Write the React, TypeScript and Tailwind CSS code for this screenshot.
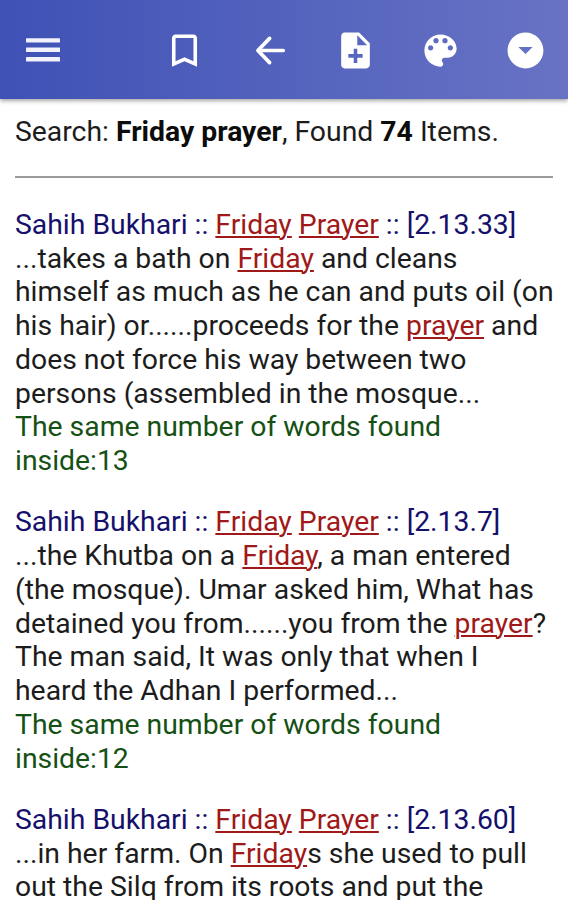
import { MdBookmarkBorder, MdNoteAdd, MdArrowDropDownCircle } from 'react-icons/md';

const results = [
  {
    ref: '[2.13.33]',
    lines: [
      '...takes a bath on *Friday* and cleans',
      'himself as much as he can and puts oil (on',
      'his hair) or......proceeds for the *prayer* and',
      'does not force his way between two',
      'persons (assembled in the mosque...',
    ],
    count: 13,
  },
  {
    ref: '[2.13.7]',
    lines: [
      '...the Khutba on a *Friday*, a man entered',
      '(the mosque). Umar asked him, What has',
      'detained you from......you from the *prayer*?',
      'The man said, It was only that when I',
      'heard the Adhan I performed...',
    ],
    count: 12,
  },
  {
    ref: '[2.13.60]',
    lines: [
      '...in her farm. On *Friday*s she used to pull',
      'out the Silq from its roots and put the',
    ],
  },
];

// text between asterisks is a search hit
function Line({ text }: { text: string }) {
  return (
    <div className="whitespace-nowrap">
      {text.split('*').map((part, i) =>
        i % 2 ? <Hit key={i}>{part}</Hit> : <span key={i}>{part}</span>
      )}
    </div>
  );
}

function Hit({ children }: { children: string }) {
  return <span className="text-[#a01818] underline decoration-[1.5px] underline-offset-[2px]">{children}</span>;
}

function MenuIcon() {
  return (
    <svg width="34" height="26" viewBox="0 0 34 26" fill="#f1f2fc">
      <rect y="1.2" width="34" height="4.4" rx="0.6" />
      <rect y="10.6" width="34" height="4.4" rx="0.6" />
      <rect y="20.1" width="34" height="4.4" rx="0.6" />
    </svg>
  );
}

function BackIcon() {
  return (
    <svg width="43" height="43" viewBox="0 0 43 43" fill="none" stroke="currentColor" strokeWidth="3.7" strokeLinecap="round" strokeLinejoin="round">
      <path d="M20.6 9.4 8.9 21.5 20.6 33.6M9.5 21.5H34.2" />
    </svg>
  );
}

function PaletteIcon() {
  return (
    <svg width="43" height="43" viewBox="0 0 24 24" fill="currentColor">
      <path d="M12 3c-4.97 0-9 4.03-9 9s4.03 9 9 9c.83 0 1.5-.67 1.5-1.5 0-.39-.15-.74-.39-1.01-.23-.26-.38-.61-.38-.99 0-.83.67-1.5 1.5-1.5H16c2.76 0 5-2.24 5-5 0-4.42-4.03-8-9-8zm-5.5 9c-.83 0-1.5-.67-1.5-1.5S5.67 9 6.5 9 8 9.67 8 10.5 7.33 12 6.5 12zm3-4C8.67 8 8 7.33 8 6.5S8.67 5 9.5 5s1.5.67 1.5 1.5S10.33 8 9.5 8zm5 0c-.83 0-1.5-.67-1.5-1.5S13.67 5 14.5 5s1.5.67 1.5 1.5S15.33 8 14.5 8zm3 4c-.83 0-1.5-.67-1.5-1.5S16.67 9 17.5 9s1.5.67 1.5 1.5-.67 1.5-1.5 1.5z" />
    </svg>
  );
}

export default function App() {
  return (
    <div className="h-[900px] w-[568px] overflow-hidden bg-white font-[Roboto,sans-serif] text-[#1c1c1c]">
      <header className="flex h-[99px] items-center bg-linear-to-r from-[#3f51b5] to-[#6873c4] pt-px pl-[26px] text-white shadow-[0_2px_4px_rgba(0,0,0,0.35)]">
        <MenuIcon />
        <div className="ml-auto flex items-center gap-[42.2px] pr-[20.8px]">
          <MdBookmarkBorder size={43} />
          <BackIcon />
          <MdNoteAdd size={43} />
          <PaletteIcon />
          <MdArrowDropDownCircle size={43} />
        </div>
      </header>

      <main className="px-[15px] pt-4 text-[28.35px] leading-[33.75px]">
        <p className="whitespace-nowrap">
          Search: <b className="text-[#0c0c0c]">Friday prayer</b>, Found <b className="text-[#0c0c0c]">74</b> Items.
        </p>
        <hr className="mt-[27px] mb-[30px] border-t-2 border-[#9a9a9a]" />
        {results.map((item) => (
          <section key={item.ref} className="mb-[27.5px]">
            <h2 className="whitespace-nowrap text-[#15106b]">
              Sahih Bukhari :: <Hit>Friday</Hit> <Hit>Prayer</Hit> :: {item.ref}
            </h2>
            {item.lines.map((text) => (
              <Line key={text} text={text} />
            ))}
            {item.count && (
              <div className="w-[460px] text-[#155015]">
                {`The same number of words found inside:${item.count}`}
              </div>
            )}
          </section>
        ))}
      </main>
    </div>
  );
}
